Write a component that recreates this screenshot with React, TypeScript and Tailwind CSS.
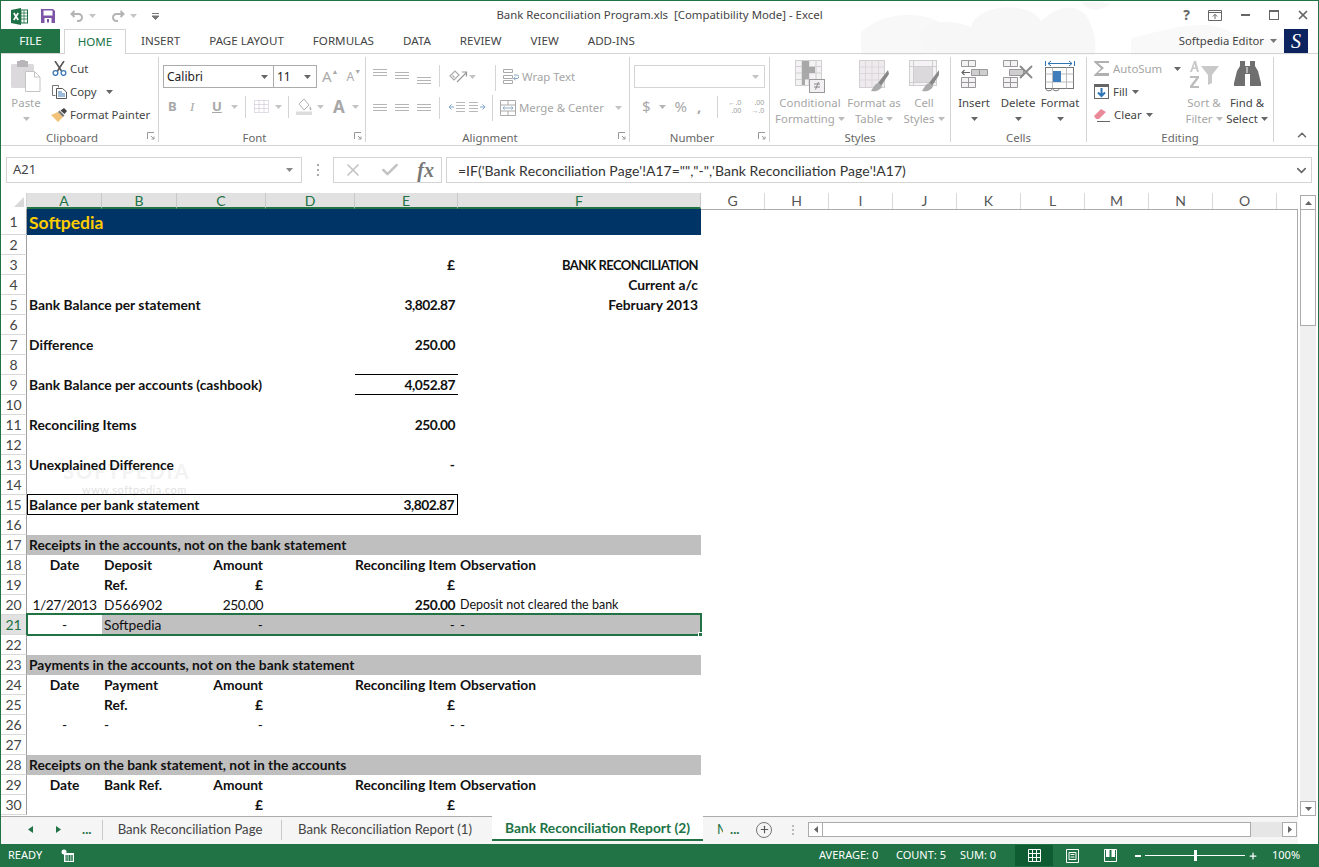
import type { ReactNode } from "react";
import { ChevronDown, ChevronUp, Plus, X, Check } from "lucide-react";

const UI = "font-['Noto_Sans',sans-serif]";
const SHEET = "font-['Lato',sans-serif]";

function Caret({ className = "text-[#777]" }: { className?: string }) {
  return (
    <svg width="7" height="4" viewBox="0 0 7 4" className={`inline-block shrink-0 ${className}`}>
      <path d="M0 0h7L3.5 4z" fill="currentColor" />
    </svg>
  );
}

function Launcher() {
  return (
    <svg width="8" height="8" viewBox="0 0 8 8" className="absolute right-[3px] bottom-[2px] text-[#999]">
      <path d="M0.5 7V0.5H7M4 4l3 3M7 4.5V7H4.5" fill="none" stroke="currentColor" />
    </svg>
  );
}

function Group({ width, label, launcher, children }: { width: string; label: string; launcher?: boolean; children: ReactNode }) {
  return (
    <div className={`relative flex h-[85px] shrink-0 flex-col border-r border-[#d4d4d4] ${width}`}>
      <div className="h-[73px]">{children}</div>
      <div className={`h-[12px] text-center text-[11.4px] leading-[16px] text-[#666] ${launcher ? "pr-[15px]" : ""}`}>{label}</div>
      {launcher && <Launcher />}
    </div>
  );
}

function LargeButton({ width, icon, lines, caret, arrow, dim }: { width: string; icon: ReactNode; lines: string[]; caret?: boolean; arrow?: string; dim?: boolean }) {
  return (
    <div className={`flex shrink-0 flex-col items-center pt-[3px] text-[11.4px] leading-[16px] ${width} ${dim ? "text-[#a6a6a6]" : "text-[#444]"}`}>
      <div className="flex h-[35px] items-start justify-center">{icon}</div>
      {lines.map((line, i) => (
        <div key={line} className="flex items-center gap-[3px] whitespace-nowrap">
          {line}
          {caret && i === lines.length - 1 && <Caret className="text-[#bbb]" />}
        </div>
      ))}
      {arrow && (
        <div className="flex h-[16px] items-center">
          <Caret className={arrow} />
        </div>
      )}
    </div>
  );
}

function TextLines({ ml = "" }: { ml?: string }) {
  return (
    <svg width="14" height="8" viewBox="0 0 14 8" className={`shrink-0 ${ml}`}>
      <path d="M0 .5H14M0 3.500H14M0 6.500H14" stroke="#b5b5b5" />
    </svg>
  );
}

function ExcelIcon() {
  return (
    <svg width="17" height="17" viewBox="0 0 17 17" className="shrink-0">
      <rect x="6" y="2" width="10.5" height="13" fill="#fff" stroke="#217346" />
      <path d="M10 2v13M13 2v13M6 5h11M6 8h11M6 11h11" stroke="#217346" strokeWidth="0.8" />
      <path d="M0 2l10-2v17L0 15z" fill="#1e7145" />
      <path d="M2.8 5l4.4 7M7.2 5l-4.4 7" stroke="#fff" strokeWidth="1.7" />
    </svg>
  );
}

function SaveIcon() {
  return (
    <svg width="14" height="14" viewBox="0 0 14 14" className="shrink-0">
      <path d="M0 0h12l2 2v12H0z" fill="#7e54a8" />
      <rect x="2.5" y="1.5" width="9" height="5" fill="#fff" />
      <rect x="3.5" y="9" width="7" height="5" fill="#fff" />
      <rect x="6" y="10" width="2" height="3.5" fill="#7e54a8" />
    </svg>
  );
}

function UndoIcon({ flip }: { flip?: boolean }) {
  return (
    <svg width="14" height="12" viewBox="0 0 14 12" className={`shrink-0 ${flip ? "-scale-x-100" : ""}`}>
      <path d="M4.5 1L1.5 4l3 3M2 4h6.5a3.5 3.5 0 0 1 0 7H7" fill="none" stroke="#b4b4b4" strokeWidth="2" />
    </svg>
  );
}

function ClipboardIcon() {
  return (
    <svg width="30" height="32" viewBox="0 0 30 32">
      <rect x="0" y="4" width="23" height="24" rx="1.5" fill="#dcd9dc" />
      <rect x="6" y="1" width="11" height="6" fill="#b9b6b9" />
      <rect x="9" y="0" width="5" height="3" fill="#b9b6b9" />
      <path d="M14.5 11.5h9l5.5 5.5v14.5H14.5z" fill="#fff" stroke="#c4c4c4" />
      <path d="M23.5 11.5V17H29" fill="none" stroke="#c4c4c4" />
    </svg>
  );
}

function ScissorsIcon() {
  return (
    <svg width="15" height="15" viewBox="0 0 15 15" className="shrink-0">
      <path d="M3 0l6.5 10M12 0L5.5 10" stroke="#555" strokeWidth="1.6" />
      <circle cx="3.5" cy="12" r="2.4" fill="none" stroke="#3b78b5" strokeWidth="1.3" />
      <circle cx="11.5" cy="12" r="2.4" fill="none" stroke="#3b78b5" strokeWidth="1.3" />
    </svg>
  );
}

function CopyIcon() {
  return (
    <svg width="15" height="14" viewBox="0 0 15 14" className="shrink-0">
      <path d="M.5.5h6v2M.5.5v10h3" fill="none" stroke="#777" />
      <path d="M4.5 3.5h6l4 3.5v6.5h-10z" fill="#fff" stroke="#555" />
      <path d="M6 7h4M6 9h7M6 11h7" stroke="#3b78b5" />
    </svg>
  );
}

function BrushIcon() {
  return (
    <svg width="16" height="14" viewBox="0 0 16 14" className="shrink-0">
      <path d="M0 7l7-3 5 5-5 5z" fill="#f2c277" />
      <path d="M7 4l5 5 1.5-1.5-5-5z" fill="#777" />
      <path d="M9.5 2.5L13 0l3 3-2.5 3z" fill="#444" />
    </svg>
  );
}

function Combo({ width, children, className = "" }: { width: string; children?: ReactNode; className?: string }) {
  return (
    <div className={`flex h-[23px] shrink-0 items-center justify-between border bg-white pr-[5px] pl-[3px] text-[12px] text-[#222] ${width} ${className}`}>
      <span>{children}</span>
      <Caret className={children ? "text-[#666]" : "text-[#c4c4c4]"} />
    </div>
  );
}

function BorderGridIcon() {
  return (
    <svg width="15" height="13" viewBox="0 0 15 13" className="ml-[8px] shrink-0">
      <path d="M.5.5h14v12H.5zM5 .5v12M10 .5v12M.5 4.5h14M.5 8.5h14" fill="none" stroke="#c2b8cc" strokeDasharray="1 1" />
    </svg>
  );
}

function FillIcon() {
  return (
    <svg width="17" height="17" viewBox="0 0 17 17" className="ml-[7px] shrink-0">
      <path d="M3 6l5-5 5 6-5 5z" fill="#fff" stroke="#b0b0b0" />
      <path d="M14 8c1 2 2 3 1 4s-2-1-1-4z" fill="#b0b0b0" />
      <rect x="0" y="13.5" width="16" height="3.5" fill="#dcdcdc" />
    </svg>
  );
}

function OrientIcon() {
  return (
    <svg width="19" height="14" viewBox="0 0 19 14" className="shrink-0">
      <path d="M1 7l5-5 4 4-5 5zM3.500 6.500l2 2" fill="none" stroke="#aaa" strokeWidth="1.2" />
      <path d="M8 13L17 4M13 3h4.500v4.500" fill="none" stroke="#999" strokeWidth="1.2" />
    </svg>
  );
}

function IndentIcon({ flip }: { flip?: boolean }) {
  return (
    <svg width="17" height="11" viewBox="0 0 17 11" className={`shrink-0 ${flip ? "-scale-x-100" : ""}`}>
      <path d="M8 .5h9M8 3.5h9M8 6.5h9M8 9.5h9" stroke="#b8b8b8" />
      <path d="M6 5H1M3.5 2.5L1 5l2.5 2.5" fill="none" stroke="#7fa6cc" />
    </svg>
  );
}

function WrapIcon() {
  return (
    <svg width="16" height="15" viewBox="0 0 16 15" className="shrink-0">
      <path d="M.5.5h9v3h-9zM.5 6.5h9v3h-9zM.5 11.5h9v3h-9z" fill="none" stroke="#aaa" />
      <path d="M11 6h3a1.5 1.5 0 0 1 0 3.5h-3M12.5 8l-2 1.5 2 1.5" fill="none" stroke="#8aa8c4" />
    </svg>
  );
}

function MergeIcon() {
  return (
    <svg width="16" height="16" viewBox="0 0 16 16" className="shrink-0">
      <path d="M.5.5h15v15H.5zM.5 5h15M.5 11h15M8 .5V5M8 11v4.5" fill="none" stroke="#aaa" />
      <path d="M3 8h10M4.5 6.5L3 8l1.5 1.5M11.5 6.5L13 8l-1.5 1.5" fill="none" stroke="#8aa8c4" />
    </svg>
  );
}

function DecimalIcon({ flip }: { flip?: boolean }) {
  return (
    <span className="flex h-[16px] w-[15px] shrink-0 flex-col items-end text-[7px] leading-[8px] text-[#a0a0a0]">
      <span>{flip ? ".00" : "←.0"}</span>
      <span>{flip ? "→.0" : ".00"}</span>
    </span>
  );
}

function CondIcon() {
  return (
    <svg width="30" height="33" viewBox="0 0 30 33">
      <rect x="0.5" y="0.5" width="26" height="25" fill="#f4f2f4" stroke="#d0d0d0" />
      <path d="M7 .5v25M14 .5v25M21 .5v25M.5 6.5h26M.5 13h26M.5 19.5h26" stroke="#d0d0d0" />
      <rect x="7" y="1" width="7" height="6" fill="#a8a8a8" />
      <rect x="7" y="7" width="13" height="6" fill="#a8a8a8" />
      <rect x="7" y="13" width="7" height="6" fill="#a8a8a8" />
      <rect x="7" y="19" width="3" height="6" fill="#a8a8a8" />
      <rect x="14.5" y="19.5" width="15" height="13" fill="#f2f0f2" stroke="#999" />
      <path d="M19 24h6M19 27h6M23.5 22l-3 7.5" stroke="#888" />
    </svg>
  );
}

function TableIcon() {
  return (
    <svg width="30" height="33" viewBox="0 0 30 33">
      <rect x="0.5" y="0.5" width="25" height="27" fill="#eeeaee" stroke="#d0d0d0" />
      <path d="M6.5 .5v27M13 .5v27M19.5 .5v27M.5 7h25M.5 13.5h25M.5 20h25" stroke="#d9d9d9" />
      <path d="M29 10L19 23l3 3 8-12z" fill="#888" />
      <path d="M20 23c-4 0-6 5-8 8 5 1 10-1 11-5z" fill="#ababab" />
    </svg>
  );
}

function CellStyleIcon() {
  return (
    <svg width="30" height="33" viewBox="0 0 30 33">
      <rect x="0.5" y="0.5" width="27" height="25" fill="#f4f2f4" stroke="#cfcfcf" />
      <rect x="4" y="7" width="20" height="15" fill="#dcd9dc" />
      <path d="M.5 6.5h27M.5 22.5h27M4.5 .5v25M23.5 .5v25" stroke="#cfcfcf" />
      <path d="M30 10L20 23l3 3 7-11z" fill="#888" />
      <path d="M21 23c-4 0-6 5-8 8 5 1 10-1 11-5z" fill="#ababab" />
    </svg>
  );
}

function InsertCellsIcon() {
  return (
    <svg width="27" height="28" viewBox="0 0 27 28">
      <path d="M.5.5h14v6H.5zM7.5.5v6M.5 17.5h14v10H.5zM7.5 17.5v10M.5 22.5h14" fill="#f4f2f4" stroke="#999" />
      <path d="M10.5 9.5h16v6h-16zM18.5 9.5v6" fill="#d0cdd0" stroke="#999" />
      <path d="M9 12.5H1M3.5 10L1 12.5 3.5 15" fill="none" stroke="#666" strokeWidth="1.2" />
    </svg>
  );
}

function DeleteCellsIcon() {
  return (
    <svg width="30" height="28" viewBox="0 0 30 28">
      <path d="M.5.5h14v6H.5zM7.5.5v6M.5 17.5h14v10H.5zM7.5 17.5v10M.5 22.5h14" fill="#f4f2f4" stroke="#999" />
      <path d="M6.5 9.5h14v6h-14z" fill="#d0cdd0" stroke="#999" />
      <path d="M17 6l12 12M29 6L17 18" stroke="#8c8c8c" strokeWidth="2" />
    </svg>
  );
}

function FormatCellsIcon() {
  return (
    <svg width="30" height="33" viewBox="0 0 30 33" className="-mt-[1px]">
      <path d="M.5 2v5M29.5 2v5M3 4.5h24M6 2L3 4.5 6 7M24 2l3 2.5L24 7" fill="none" stroke="#2f75b5" />
      <rect x="0.5" y="8.5" width="28" height="21" fill="#fff" stroke="#777" />
      <path d="M7.5 8.5v21M21.5 8.5v21M.5 15h28M.5 23h28" stroke="#bbb" />
      <rect x="8" y="12" width="8" height="11" fill="#3f7dbb" />
      <path d="M.5 29.5c1 3 6 3 7 0M7.5 29.5c1 3 6 3 7 0" fill="none" stroke="#777" />
    </svg>
  );
}

function SigmaIcon() {
  return (
    <svg width="15" height="15" viewBox="0 0 15 15" className="shrink-0">
      <path d="M15 3V0H0v1l7 6.5L0 14v1h15v-3H4l6-5L4 2h11z" fill="#b0b0b0" />
    </svg>
  );
}

function FillDownIcon() {
  return (
    <svg width="15" height="15" viewBox="0 0 15 15" className="shrink-0">
      <rect x="0.5" y="0.5" width="14" height="14" fill="#fff" stroke="#666" />
      <rect x="0" y="0" width="15" height="3" fill="#666" />
      <path d="M7.5 4v8M4 8.5l3.5 3.5L11 8.5" fill="none" stroke="#2f75b5" strokeWidth="2" />
    </svg>
  );
}

function EraserIcon() {
  return (
    <svg width="16" height="14" viewBox="0 0 16 14" className="shrink-0">
      <path d="M0 8l7-7 5 3-7 7H2z" fill="#e98a9b" />
      <path d="M3 13.5h13" stroke="#666" />
    </svg>
  );
}

function SortIcon() {
  return (
    <svg width="31" height="30" viewBox="0 0 31 30">
      <path d="M5 1L1 12h2l1-3h3l1 3h2L7 1zM4.500 7.500L5.500 4l1 3.500z" fill="#c9c9c9" fillRule="evenodd" />
      <path d="M1 16h9v2l-6 8h6v2H1v-2l6-8H1z" fill="#bdbdbd" />
      <path d="M12 6h18l-7 9v8l-4 2V15z" fill="#c9c9c9" />
    </svg>
  );
}

function BinocularsIcon() {
  return (
    <svg width="27" height="27" viewBox="0 0 27 27">
      <path d="M6 1h5v5h5V1h5v5l3 5 3 12v3H16V14h-5v12H0v-3l3-12 3-5z" fill="#6f6f6f" />
      <path d="M13 7v6" stroke="#fff" />
    </svg>
  );
}

function CloudsArt() {
  return (
    <svg width="440" height="53" viewBox="0 0 440 53" className="pointer-events-none absolute top-[1px] left-[860px]">
      <path d="M0 30c30-25 70-20 90-2 12 12 0 24-30 25H0z" fill="#f8f8f8" />
      <path d="M70 53c-30-30 10-40 40-28 6-24 60-26 70-6 20-18 35-16 45-6 8 14 12 30 8 40z" fill="#f7f7f7" />
      <path d="M220 0c10 12 20 8 30 2l-10-2z" fill="#f7f7f7" />
      <path d="M270 36c30-6 70-22 100-6 30 12 50 6 70 0v23H270z" fill="#f9f9f9" />
    </svg>
  );
}

type RowSpec = {
  n: number;
  a?: string;
  b?: string;
  c?: string;
  e?: string;
  f?: string;
  bold?: boolean;
  label?: boolean;
  band?: boolean;
  fRight?: boolean;
  fCaps?: boolean;
  eBold?: boolean;
  eLines?: boolean;
  box?: boolean;
  small?: boolean;
  selected?: boolean;
};

const rows: RowSpec[] = [
  { n: 2 },
  { n: 3, e: "£", f: "BANK RECONCILIATION", bold: true, fRight: true, fCaps: true },
  { n: 4, f: "Current a/c", bold: true, fRight: true },
  { n: 5, a: "Bank Balance per statement", e: "3,802.87", f: "February 2013", bold: true, label: true, fRight: true },
  { n: 6 },
  { n: 7, a: "Difference", e: "250.00", bold: true, label: true },
  { n: 8 },
  { n: 9, a: "Bank Balance per accounts (cashbook)", e: "4,052.87", bold: true, label: true, eLines: true },
  { n: 10 },
  { n: 11, a: "Reconciling Items", e: "250.00", bold: true, label: true },
  { n: 12 },
  { n: 13, a: "Unexplained Difference", e: "-", bold: true, label: true },
  { n: 14 },
  { n: 15, a: "Balance per bank statement", e: "3,802.87", bold: true, label: true, box: true },
  { n: 16 },
  { n: 17, a: "Receipts in the accounts, not on the bank statement", bold: true, label: true, band: true },
  { n: 18, a: "Date", b: "Deposit", c: "Amount", e: "Reconciling Item", f: "Observation", bold: true },
  { n: 19, b: "Ref.", c: "£", e: "£", bold: true },
  { n: 20, a: "1/27/2013", b: "D566902", c: "250.00", e: "250.00", f: "Deposit not cleared the bank", eBold: true, small: true },
  { n: 21, a: "-", b: "Softpedia", c: "-", e: "-", f: "-", selected: true },
  { n: 22 },
  { n: 23, a: "Payments in the accounts, not on the bank statement", bold: true, label: true, band: true },
  { n: 24, a: "Date", b: "Payment", c: "Amount", e: "Reconciling Item", f: "Observation", bold: true },
  { n: 25, b: "Ref.", c: "£", e: "£", bold: true },
  { n: 26, a: "-", b: "-", c: "-", e: "-", f: "-" },
  { n: 27 },
  { n: 28, a: "Receipts on the bank statement, not in the accounts", bold: true, label: true, band: true },
  { n: 29, a: "Date", b: "Bank Ref.", c: "Amount", e: "Reconciling Item", f: "Observation", bold: true },
  { n: 30, c: "£", e: "£", bold: true },
];

// Lato digits run wider than the sheet's, pull numbers in a little
const numeric = (value?: string) => (value && /^\d/.test(value) ? "tracking-[-0.5px]" : "");

function SheetRow({ row }: { row: RowSpec }) {
  const weight = row.bold ? "font-bold" : "font-normal";
  const gray = row.selected ? "bg-[#c0c0c0]" : "";
  const boxed = row.box ? "-mt-px h-[21px] border-t border-b border-black" : "";
  return (
    <div className="relative flex h-[20px]">
      <div
        className={`w-[26px] shrink-0 border-r border-b border-r-[#9f9f9f] border-b-[#d8d8d8] text-center text-[14px] leading-[20px] ${
          row.selected ? "bg-[#e1e1e1] text-[#217346]" : "text-[#444]"
        }`}
      >
        {row.n}
      </div>
      <div className={`grid grid-cols-[75px_75px_89px_89px_103px_243px] text-[13.8px] leading-[20px] text-[#111] ${weight} ${row.band ? "bg-[#bfbfbf]" : ""}`}>
        <div
          className={`whitespace-nowrap ${numeric(row.a)} ${row.label ? "text-left" : "text-center"} ${row.box ? "border-l border-l-black pl-[1px]" : row.label ? "pl-[2px]" : ""} ${boxed}`}
        >
          {row.a}
        </div>
        <div className={`whitespace-nowrap pl-[2px] ${gray} ${boxed}`}>{row.b}</div>
        <div className={`whitespace-nowrap pr-[3px] text-right ${numeric(row.c)} ${gray} ${boxed}`}>{row.c}</div>
        <div className={`${gray} ${boxed}`} />
        <div
          className={`whitespace-nowrap pr-[3px] text-right ${numeric(row.e)} ${gray} ${row.eBold ? "font-bold" : ""} ${row.eLines ? "-mt-px h-[21px] border-t border-b border-black" : ""} ${
            row.box ? "border-r border-r-black pr-[2px]" : ""
          } ${boxed}`}
        >
          {row.e}
        </div>
        <div
          className={`whitespace-nowrap ${gray} ${row.fRight ? "pr-[3px] text-right" : "pl-[2px]"} ${row.small ? "text-[12.5px]" : ""} ${row.fCaps ? "text-[13px] tracking-[-0.6px]" : ""}`}
        >
          {row.f}
        </div>
      </div>
      {row.selected && (
        <div className="absolute -top-[2px] left-[25px] h-[23px] w-[676px] border-2 border-[#217346]">
          <div className="absolute -right-[3px] -bottom-[3px] h-[5px] w-[5px] border border-white bg-[#217346]" />
        </div>
      )}
    </div>
  );
}

const columns = [
  { name: "A", w: "w-[75px]" },
  { name: "B", w: "w-[75px]" },
  { name: "C", w: "w-[89px]" },
  { name: "D", w: "w-[89px]" },
  { name: "E", w: "w-[103px]" },
  { name: "F", w: "w-[243px]" },
];

export default function App() {
  return (
    <div className={`flex h-[867px] w-[1319px] flex-col overflow-hidden border-x border-t border-[#217346] bg-white ${UI}`}>
      <div className="relative shrink-0">
        <CloudsArt />
        {/* title bar */}
        <div className="relative flex h-[28px] items-center">
          <div className="flex w-[200px] items-center pt-[2px] pl-[10px]">
            <ExcelIcon />
            <span className="ml-[13px]"><SaveIcon /></span>
            <span className="ml-[15px]"><UndoIcon /></span>
            <Caret className="ml-[5px] text-[#c4c4c4]" />
            <span className="ml-[15px]"><UndoIcon flip /></span>
            <Caret className="ml-[5px] text-[#c4c4c4]" />
            <svg width="7" height="7" viewBox="0 0 7 7" className="ml-[15px]">
              <path d="M0 .5h7M0 3h7l-3.500 3.500z" stroke="#777" fill="#777" strokeWidth="1" />
            </svg>
          </div>
          <div className="flex-1 text-center text-[11.4px] text-[#444]">Bank Reconciliation Program.xls&nbsp; [Compatibility Mode] - Excel</div>
          <div className="flex w-[200px] items-center justify-end pr-[8px] text-[#666]">
            <span className="text-[14px] leading-none font-bold">?</span>
            <svg width="14" height="11" viewBox="0 0 14 11" className="ml-[18px] shrink-0">
              <path d="M.5.5h13v10H.5zM.5 2.500h13M7 9V4.500M4.800 6.500L7 4.300l2.200 2.200" fill="none" stroke="#666" />
            </svg>
            <span className="ml-[19px] h-[2px] w-[9px] bg-[#666]" />
            <span className="ml-[19px] h-[10px] w-[10px] border border-t-2 border-[#666]" />
            <X size={14} strokeWidth={3} className="ml-[17px]" />
          </div>
        </div>
        {/* ribbon tabs */}
        <div className="relative flex h-[25px] items-stretch border-b border-[#d4d4d4] text-[11.6px] text-[#444]">
          <div className="flex w-[59px] items-center justify-center bg-[#217346] text-white">FILE</div>
          <div className="z-10 ml-[4px] -mb-px flex w-[62px] items-center justify-center border-x border-t border-[#d4d4d4] bg-white text-[#217346]">HOME</div>
          <span className="ml-[15px] self-center">INSERT</span>
          <span className="ml-[29px] self-center">PAGE LAYOUT</span>
          <span className="ml-[29px] self-center">FORMULAS</span>
          <span className="ml-[29px] self-center">DATA</span>
          <span className="ml-[29px] self-center">REVIEW</span>
          <span className="ml-[29px] self-center">VIEW</span>
          <span className="ml-[29px] self-center">ADD-INS</span>
          <div className="ml-auto flex items-center">
            <span className="text-[11.3px]">Softpedia Editor</span>
            <Caret className="mr-[7px] ml-[6px] text-[#777]" />
            <span className="mr-[10px] flex h-[24px] w-[24px] items-center justify-center bg-[#0b2460] font-['Liberation_Serif',serif] text-[20px] text-white italic">S</span>
          </div>
        </div>
      </div>

      {/* ribbon */}
      <div className="flex h-[92px] shrink-0 border-b border-[#d4d4d4] pt-[3px] text-[11.4px] text-[#444]">
        <Group width="w-[158px]" label="Clipboard" launcher>
          <div className="flex h-full">
            <LargeButton width="w-[50px]" icon={<ClipboardIcon />} lines={["Paste"]} arrow="text-[#bbb]" dim />
            <div className="flex flex-col">
              {[
                { icon: <ScissorsIcon />, text: "Cut" },
                { icon: <CopyIcon />, text: "Copy" },
                { icon: <BrushIcon />, text: "Format Painter" },
              ].map((item) => (
                <div key={item.text} className="flex h-[23px] items-center gap-[3px]">
                  <span className="flex w-[16px] justify-center">{item.icon}</span>
                  {item.text}
                  {item.text === "Copy" && <Caret className="ml-[6px] text-[#666]" />}
                </div>
              ))}
            </div>
          </div>
        </Group>

        <Group width="w-[207px]" label="Font" launcher>
          <div className="flex items-center pt-[8px] pl-[4px]">
            <Combo width="w-[111px]" className="border-[#ababab]">Calibri</Combo>
            <Combo width="w-[44px]" className="-ml-px border-[#ababab]">11</Combo>
            <span className="ml-[5px] text-[15px] text-[#aaa]">A</span>
            <span className="-mt-[8px] text-[7px] text-[#aaa]">▲</span>
            <span className="ml-[8px] text-[12px] text-[#aaa]">A</span>
            <span className="-mt-[8px] text-[7px] text-[#aaa]">▼</span>
          </div>
          <div className="mt-[7px] flex h-[23px] items-center pl-[9px] text-[13px] text-[#a8a8a8]">
            <span className="w-[22px] font-bold">B</span>
            <span className="w-[22px] font-['Liberation_Serif',serif] italic">I</span>
            <span className="w-[13px] font-bold underline">U</span>
            <Caret className="ml-[6px] text-[#c4c4c4]" />
            <span className="ml-[7px] h-[22px] w-px bg-[#d4d4d4]" />
            <BorderGridIcon />
            <Caret className="ml-[6px] text-[#c4c4c4]" />
            <span className="ml-[6px] h-[22px] w-px bg-[#d4d4d4]" />
            <FillIcon />
            <Caret className="ml-[4px] text-[#c4c4c4]" />
            <span className="ml-[9px] w-[12px] text-[17px] leading-none font-bold">A</span>
            <Caret className="ml-[7px] text-[#c4c4c4]" />
          </div>
        </Group>

        <Group width="w-[264px]" label="Alignment" launcher>
          <div className="flex h-[37px] items-start pl-[7px]">
            <TextLines ml="mt-[12px]" />
            <TextLines ml="mt-[15px] ml-[8px]" />
            <TextLines ml="mt-[20px] ml-[8px]" />
            <span className="mt-[8px] ml-[8px] h-[22px] w-px bg-[#d4d4d4]" />
            <span className="mt-[12px] ml-[9px]"><OrientIcon /></span>
            <Caret className="mt-[18px] ml-[1px] text-[#c4c4c4]" />
            <span className="mt-[8px] ml-[19px] h-[26px] w-px bg-[#d4d4d4]" />
            <span className="mt-[12px] ml-[7px]"><WrapIcon /></span>
            <span className="mt-[11px] ml-[3px] text-[#a6a6a6]">Wrap Text</span>
          </div>
          <div className="flex h-[27px] items-center pl-[7px] text-[#a6a6a6]">
            <TextLines />
            <TextLines ml="ml-[8px]" />
            <TextLines ml="ml-[8px]" />
            <span className="ml-[8px] h-[22px] w-px bg-[#d4d4d4]" />
            <span className="ml-[8px]"><IndentIcon /></span>
            <span className="ml-[4px]"><IndentIcon flip /></span>
            <span className="ml-[6px] h-[26px] w-px bg-[#d4d4d4]" />
            <span className="ml-[7px]"><MergeIcon /></span>
            <span className="ml-[3px]">Merge &amp; Center</span>
            <Caret className="ml-[11px] text-[#c4c4c4]" />
          </div>
        </Group>

        <Group width="w-[140px]" label="Number" launcher>
          <div className="pt-[8px] pl-[4px]">
            <Combo width="w-[131px]" className="border-[#d4d4d4]" />
          </div>
          <div className="mt-[7px] flex h-[23px] items-center pl-[12px] text-[#a8a8a8]">
            <span className="text-[15px]">$</span>
            <Caret className="ml-[8px] text-[#b4b4b4]" />
            <span className="ml-[9px] text-[15px]">%</span>
            <span className="ml-[10px] text-[15px] font-bold">,</span>
            <span className="ml-[16px] h-[22px] w-px bg-[#d4d4d4]" />
            <span className="ml-[8px]"><DecimalIcon /></span>
            <span className="ml-[8px]"><DecimalIcon flip /></span>
          </div>
        </Group>

        <Group width="w-[181px]" label="Styles">
          <div className="flex">
            <LargeButton width="w-[80px]" icon={<CondIcon />} lines={["Conditional", "Formatting"]} caret dim />
            <LargeButton width="w-[48px]" icon={<TableIcon />} lines={["Format as", "Table"]} caret dim />
            <LargeButton width="w-[52px]" icon={<CellStyleIcon />} lines={["Cell", "Styles"]} caret dim />
          </div>
        </Group>

        <Group width="w-[136px]" label="Cells">
          <div className="flex">
            <LargeButton width="w-[46px]" icon={<InsertCellsIcon />} lines={["Insert"]} arrow="text-[#666]" />
            <LargeButton width="w-[42px]" icon={<DeleteCellsIcon />} lines={["Delete"]} arrow="text-[#666]" />
            <LargeButton width="w-[42px]" icon={<FormatCellsIcon />} lines={["Format"]} arrow="text-[#666]" />
          </div>
        </Group>

        <Group width="w-[187px]" label="Editing">
          <div className="flex">
            <div className="flex w-[95px] shrink-0 flex-col pl-[7px]">
              <div className="flex h-[23px] items-center gap-[4px] text-[#a6a6a6]">
                <SigmaIcon />
                AutoSum
                <Caret className="ml-[8px] text-[#666]" />
              </div>
              <div className="flex h-[23px] items-center gap-[4px]">
                <FillDownIcon />
                Fill
                <Caret className="text-[#666]" />
              </div>
              <div className="flex h-[23px] items-center gap-[4px]">
                <EraserIcon />
                Clear
                <Caret className="text-[#666]" />
              </div>
            </div>
            <LargeButton width="w-[44px]" icon={<SortIcon />} lines={["Sort &", "Filter"]} caret dim />
            <div className="flex w-[42px] shrink-0 flex-col items-center pt-[3px] leading-[16px]">
              <div className="flex h-[35px] items-start"><BinocularsIcon /></div>
              <div className="whitespace-nowrap">Find &amp;</div>
              <div className="flex items-center gap-[3px] whitespace-nowrap">Select <Caret className="text-[#666]" /></div>
            </div>
          </div>
        </Group>

        <div className="flex flex-1 items-end justify-end pr-[9px] pb-[3px]">
          <ChevronUp size={14} strokeWidth={2.5} className="text-[#666]" />
        </div>
      </div>

      {/* formula bar */}
      <div className="flex h-[47px] shrink-0 items-start pt-[11px] pl-[5px]">
        <div className="flex h-[26px] w-[296px] items-center justify-between border border-[#d4d4d4] pr-[7px] pl-[6px] text-[13px] text-[#444]">
          A21
          <Caret className="w-[9px] text-[#888]" />
        </div>
        <div className="flex h-[26px] w-[31px] flex-col items-center justify-center gap-[3px]">
          <span className="h-[2px] w-[2px] bg-[#aaa]" />
          <span className="h-[2px] w-[2px] bg-[#aaa]" />
          <span className="h-[2px] w-[2px] bg-[#aaa]" />
        </div>
        <div className="flex h-[26px] w-[109px] items-center justify-between border border-[#d4d4d4] pr-[7px] pl-[9px] text-[#c4c4c4]">
          <X size={20} strokeWidth={2} />
          <Check size={20} strokeWidth={3} />
          <span className="font-['Liberation_Serif',serif] text-[20px] font-bold text-[#777] italic">fx</span>
        </div>
        <div className={`ml-[4px] flex h-[26px] w-[866px] items-center justify-between border border-[#d4d4d4] pr-[2px] pl-[11px] text-[14px] text-[#333] [font-kerning:none] ${SHEET}`}>
          <span>=IF('Bank Reconciliation Page'!A17="","-",'Bank Reconciliation Page'!A17)</span>
          <ChevronDown size={15} strokeWidth={2.5} className="text-[#666]" />
        </div>
      </div>

      {/* sheet */}
      <div className={`flex min-h-0 flex-1 ${SHEET}`}>
        <div className="flex w-[1299px] shrink-0 flex-col">
          <div className="flex h-[16px] shrink-0 text-[14px] leading-[16px]">
            <div className="flex w-[26px] shrink-0 items-end justify-end border-r border-[#d4d4d4] pr-[2px] pb-[2px]">
              <svg width="10" height="10" viewBox="0 0 10 10"><path d="M10 0v10H0z" fill="#d8d8d8" /></svg>
            </div>
            {columns.map((col) => (
              <div key={col.name} className={`shrink-0 border-r border-b-2 border-r-[#c8c8c8] border-b-[#217346] bg-[#e1e1e1] text-center text-[#217346] ${col.w}`}>
                {col.name}
              </div>
            ))}
            {["G", "H", "I", "J", "K", "L", "M", "N", "O"].map((name) => (
              <div key={name} className="w-[64px] shrink-0 border-r border-[#d8d8d8] text-center text-[#555]">{name}</div>
            ))}
          </div>
          <div className="relative flex min-h-0 flex-1">
            <div className="pointer-events-none absolute top-[247px] left-[62px] text-[20px] font-bold tracking-[2px] text-[#f3f3f3]">SOFTPEDIA</div>
            <div className="pointer-events-none absolute top-[273px] left-[81px] text-[11px] tracking-[0.5px] text-[#e2e2e2]">www.softpedia.com</div>
            <div className="relative w-[700px] shrink-0">
              <div className="flex h-[26px]">
                <div className="w-[26px] shrink-0 border-r border-b border-r-[#9f9f9f] border-b-[#d8d8d8] text-center text-[14px] leading-[26px] text-[#444]">1</div>
                <div className="flex-1 bg-[#003366] pl-[2px] text-[17.5px] leading-[27px] font-bold text-[#ffcc00]">Softpedia</div>
              </div>
              {rows.map((row) => (
                <SheetRow key={row.n} row={row} />
              ))}
            </div>
            <div className="w-[597px] shrink-0 border-t border-r border-[#ababab]" />
          </div>
        </div>
        <div className="flex w-[16px] shrink-0 flex-col pt-[2px]">
          <div className="flex h-[15px] items-center justify-center border border-[#ababab]">
            <Caret className="rotate-180 text-[#666]" />
          </div>
          <div className="h-[116px] border-x border-b border-[#ababab]" />
          <div className="flex-1 bg-[#f0f0f0]" />
          <div className="flex h-[15px] items-center justify-center border border-[#ababab]">
            <Caret className="text-[#666]" />
          </div>
        </div>
      </div>

      {/* sheet tabs */}
      <div className={`flex h-[28px] w-[1297px] shrink-0 bg-[#f5f5f5] text-[13.2px] text-[#444] ${SHEET}`}>
        <div className="flex w-[101px] shrink-0 items-center border-t border-[#ababab] pb-[2px] pl-[27px]">
          <svg width="5" height="7" viewBox="0 0 5 7"><path d="M5 0v7L0 3.500z" fill="#217346" /></svg>
          <svg width="5" height="7" viewBox="0 0 5 7" className="ml-[23px]"><path d="M0 0v7l5-3.500z" fill="#217346" /></svg>
          <span className="ml-[21px] font-bold text-[#217346]">...</span>
        </div>
        <div className="flex w-[180px] shrink-0 items-center justify-center border-t border-[#ababab] pb-[2px]">
          <span className="flex h-[20px] w-full items-center justify-center border-x border-[#c8c8c8] pr-[4px]">Bank Reconciliation Page</span>
        </div>
        <div className="flex w-[210px] shrink-0 items-center justify-center border-t border-[#ababab] pr-[4px] pb-[2px]">Bank Reconciliation Report (1)</div>
        <div className="flex h-[25px] w-[211px] shrink-0 items-center justify-center border-b-2 border-[#217346] bg-white pt-[2px] text-[13.8px] font-bold text-[#217346]">Bank Reconciliation Report (2)</div>
        <div className="flex flex-1 items-center border-t border-[#ababab] pb-[2px]">
          <span className="ml-[14px] w-[6px] overflow-hidden text-[#217346]">M</span>
          <span className="ml-[7px] font-bold text-[#217346]">...</span>
          <span className="ml-[17px] flex h-[16px] w-[16px] items-center justify-center rounded-full border border-[#777]">
            <Plus size={11} strokeWidth={2.5} className="text-[#555]" />
          </span>
          <span className="ml-[20px] flex flex-col gap-[2px]">
            <span className="h-[2px] w-[2px] bg-[#bbb]" />
            <span className="h-[2px] w-[2px] bg-[#bbb]" />
            <span className="h-[2px] w-[2px] bg-[#bbb]" />
          </span>
          <div className="ml-[14px] flex h-[15px] w-[489px] items-stretch">
            <div className="flex w-[15px] items-center justify-center border border-[#ababab] bg-white">
              <svg width="4" height="7" viewBox="0 0 4 7"><path d="M4 0v7L0 3.500z" fill="#666" /></svg>
            </div>
            <div className="w-[428px] border-y border-r border-[#ababab] bg-white" />
            <div className="flex-1 bg-[#e6e6e6]" />
            <div className="flex w-[15px] items-center justify-center border border-[#ababab] bg-white">
              <svg width="4" height="7" viewBox="0 0 4 7"><path d="M0 0v7l4-3.500z" fill="#666" /></svg>
            </div>
          </div>
        </div>
      </div>

      {/* status bar */}
      <div className="flex h-[23px] shrink-0 items-center bg-[#217346] text-[11px] whitespace-nowrap text-white">
        <span className="ml-[7px] w-[34px]">READY</span>
        <svg width="14" height="14" viewBox="0 0 14 14" className="ml-[19px]">
          <rect x="3" y="4" width="10" height="9" fill="#fff" />
          <path d="M4 7h8M4 9h8M4 11h8M6 6v6M8.500 6v6M11 6v6" stroke="#217346" />
          <circle cx="3" cy="3" r="2.500" fill="#fff" />
        </svg>
        <span className="ml-[744px] w-[60px]">AVERAGE: 0</span>
        <span className="ml-[17px] w-[48px]">COUNT: 5</span>
        <span className="ml-[16px] w-[36px]">SUM: 0</span>
        <div className="ml-[19px] flex h-[21px] w-[38px] items-center justify-center bg-[#0f5c32]">
          <svg width="13" height="13" viewBox="0 0 13 13"><path d="M.5.5h12v12H.5zM4.500.5v12M8.500.5v12M.5 4.500h12M.5 8.500h12" fill="none" stroke="#fff" /></svg>
        </div>
        <svg width="13" height="14" viewBox="0 0 13 14" className="ml-[13px]"><path d="M.5.5h12v13H.5zM3 3.500h7v7H3zM4.500 5.500h4M4.500 8h4" fill="none" stroke="#fff" /></svg>
        <svg width="13" height="13" viewBox="0 0 13 13" className="ml-[25px]">
          <path d="M.5.5h12v12H.5z" fill="none" stroke="#fff" />
          <path d="M2 1h3.500v7H2zM7.500 1H11v7H7.500z" fill="#fff" />
        </svg>
        <span className="ml-[18px] h-[2px] w-[6px] bg-white" />
        <div className="relative ml-[4px] flex h-[11px] w-[100px] items-center">
          <span className="h-px w-full bg-white" />
          <span className="absolute left-[49px] h-[11px] w-[3px] bg-white" />
        </div>
        <Plus size={10} strokeWidth={3} className="ml-[3px]" />
        <span className="ml-[14px]">100%</span>
      </div>
    </div>
  );
}
